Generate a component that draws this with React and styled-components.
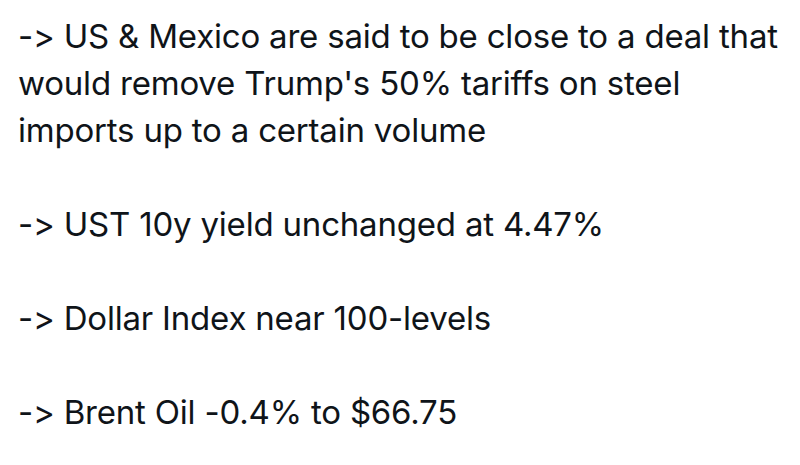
import React from 'react';
import styled, { createGlobalStyle } from 'styled-components';

const GlobalStyle = createGlobalStyle`
  html, body {
    margin: 0;
    padding: 0;
    background: #fff;
  }
`;

const textColor = "#0f1419";

const Post = styled.div`
  width: 800px;
  height: 465px;
  box-sizing: border-box;
  padding: 13px 18px 0;
  font-family: 'Inter', 'Roboto', sans-serif;
  font-size: 33px;
  line-height: 47px;
  letter-spacing: -0.2px;
  font-feature-settings: "calt" 0, "liga" 0;
  font-variant-ligatures: none;
  color: ${textColor};
  overflow: hidden;
`;

const Para = styled.p`
  margin: 0 0 47px;
  white-space: nowrap;
`;

const lines = [
  [
    "-> US & Mexico are said to be close to a deal that",
    "would remove Trump's 50% tariffs on steel",
    "imports up to a certain volume",
  ],
  ["-> UST 10y yield unchanged at 4.47%"],
  ["-> Dollar Index near 100-levels"],
  ["-> Brent Oil -0.4% to $66.75"],
];

export default () => (
  <>
    <GlobalStyle />
    <Post>
      {lines.map((para, i) => (
        <Para key={i}>
          {para.map((l, j) => (
            <React.Fragment key={j}>
              {l}
              {j < para.length - 1 && <br />}
            </React.Fragment>
          ))}
        </Para>
      ))}
    </Post>
  </>
);
